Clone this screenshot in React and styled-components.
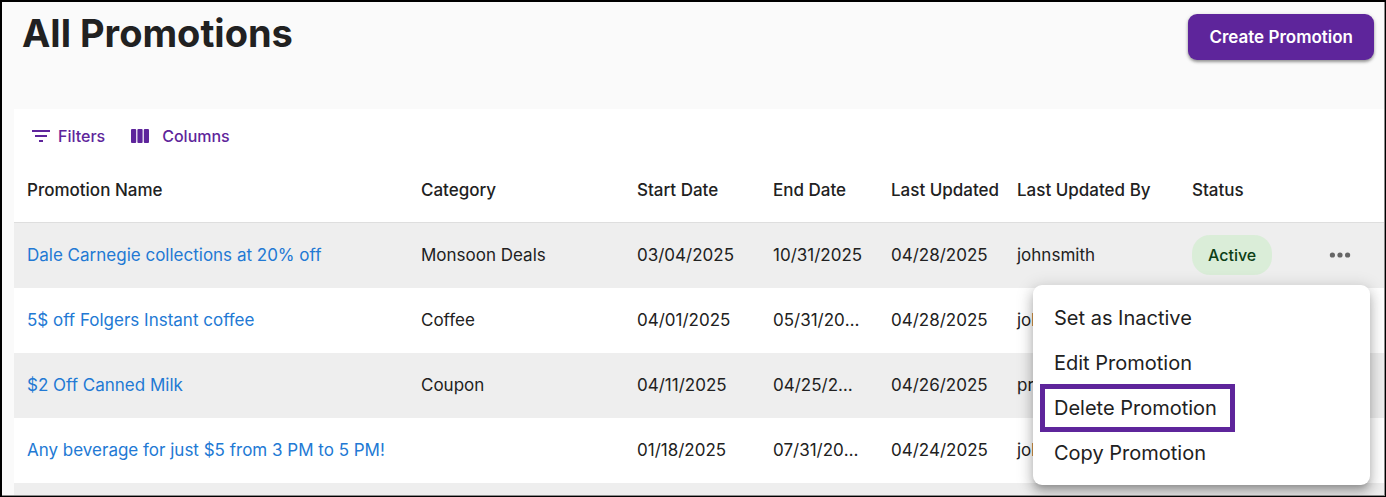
import React from "react";
import styled, { createGlobalStyle } from "styled-components";

const GlobalStyle = createGlobalStyle`
  *, *::before, *::after { box-sizing: border-box; }
  body { margin: 0; background: #fafafa; }
  button { font: inherit; font-optical-sizing: inherit; cursor: pointer; }
`;

const PURPLE = "#5e259b";

const Frame = styled.div`
  height: 100vh;
  border: solid #000;
  border-width: 2px 1px 1px 2px;
`;

const Page = styled.div`
  display: flex;
  flex-direction: column;
  height: 100%;
  overflow: hidden;
  border: solid #8c8c8c;
  border-width: 0 1px 1px 0;
  background: #fafafa;
  color: #212121;
  font-family: Inter, "Liberation Sans", sans-serif;
  font-size: 17px;
  line-height: 24px;
  font-optical-sizing: none;
`;

const Header = styled.header`
  display: flex;
  flex-shrink: 0;
  align-items: flex-start;
  justify-content: space-between;
  padding: 12px 10px 0 20px;
  height: 107px;
`;

const Title = styled.h1`
  margin: 0;
  font-size: 38px;
  line-height: 38px;
  font-weight: 700;
`;

const PrimaryButton = styled.button`
  height: 46px;
  padding: 0 21px;
  border: 0;
  border-radius: 9px;
  background: ${PURPLE};
  color: #fff;
  font-weight: 600;
  box-shadow: 0 2px 3px rgba(0, 0, 0, 0.35), 0 1px 5px rgba(0, 0, 0, 0.12);
`;

const Panel = styled.main`
  flex: 1 0 auto;
  margin-left: 12px;
  background: #fff;
`;

const Toolbar = styled.div`
  display: flex;
  gap: 26px;
  padding: 14px 15px 0;
  height: 48px;
`;

const ToolButton = styled.button`
  display: flex;
  align-items: center;
  gap: ${(p) => p.$gap}px;
  height: 26px;
  padding: 0;
  border: 0;
  background: none;
  color: ${PURPLE};
  font-weight: 500;
  font-size: 16px;
`;

const Table = styled.table`
  width: 100%;
  table-layout: fixed;
  border-collapse: separate;
  border-spacing: 0;
`;

const Col = styled.col`
  width: ${(p) => (p.$width ? `${p.$width}px` : "auto")};
`;

const HeadCell = styled.th`
  height: 66px;
  padding: 0 8px;
  border-bottom: 1px solid #dedede;
  text-align: left;
  font-weight: 500;
  white-space: nowrap;

  &:first-child { padding-left: 13px; }
`;

const Row = styled.tr`
  &:nth-child(odd) { background: #eee; }
`;

const Cell = styled.td`
  height: 65px;
  padding: 0 ${(p) => (p.$tight ? 20 : 16)}px 2px 8px;
  overflow: hidden;
  text-overflow: ellipsis;
  white-space: nowrap;

  &:first-child { padding-left: 13px; }
`;

const ActionCell = styled.td`
  padding: 0 14px 2px 0;
`;

const ActionAnchor = styled.div`
  position: relative;
  display: flex;
  justify-content: center;
`;

const NameLink = styled.a`
  color: #2279d4;
  text-decoration: none;
`;

const Chip = styled.span`
  display: inline-block;
  padding: 8px 16px;
  border-radius: 18px;
  background: #daedd8;
  color: #0d3f16;
  font-size: 16px;
  font-weight: 500;
  vertical-align: middle;
`;

const MoreButton = styled.button`
  display: flex;
  align-items: center;
  justify-content: center;
  width: 40px;
  height: 40px;
  padding: 0;
  border: 0;
  background: none;
  color: #666;
`;

const Menu = styled.div`
  position: absolute;
  z-index: 1;
  top: 50px;
  right: 0;
  width: 337px;
  padding: 11px 0 9px;
  border-radius: 9px;
  background: #fff;
  box-shadow: 0 5px 6px -3px rgba(0, 0, 0, 0.22), 0 8px 12px 1px rgba(0, 0, 0, 0.16),
    0 3px 16px 3px rgba(0, 0, 0, 0.13);
`;

const MenuItem = styled.button`
  display: flex;
  align-items: center;
  width: 100%;
  height: 45px;
  padding: 0 21px;
  border: 0;
  background: none;
  color: #212121;
  font-size: 20px;
`;

const Highlight = styled.span`
  margin: 0 -14px;
  padding: 7px 13px 7px 9px;
  border: 5px solid ${PURPLE};
`;

const FilterIcon = () => (
  <svg width="24" height="24" viewBox="0 0 24 24" fill="currentColor" aria-hidden="true">
    <path d="M10 18h4v-2h-4v2zM3 6v2h18V6H3zm3 7h12v-2H6v2z" />
  </svg>
);

const ColumnsIcon = () => (
  <svg width="18" height="14" viewBox="0 0 18 14" fill="currentColor" aria-hidden="true">
    <rect x="0" y="0" width="5.2" height="14" rx="1" />
    <rect x="6.4" y="0" width="5.2" height="14" rx="1" />
    <rect x="12.8" y="0" width="5.2" height="14" rx="1" />
  </svg>
);

const MoreIcon = () => (
  <svg width="22" height="6" viewBox="0 0 22 6" fill="currentColor" aria-hidden="true">
    <circle cx="3.4" cy="3" r="2.6" />
    <circle cx="11" cy="3" r="2.6" />
    <circle cx="18.6" cy="3" r="2.6" />
  </svg>
);

const columns = [
  { label: "Promotion Name" },
  { label: "Category", width: 216 },
  { label: "Start Date", width: 136 },
  { label: "End Date", width: 118, tight: true },
  { label: "Last Updated", width: 126 },
  { label: "Last Updated By", width: 175 },
  { label: "Status", width: 126 },
  { label: "", width: 74 },
];

const promotions = [
  ["Dale Carnegie collections at 20% off", "Monsoon Deals", "03/04/2025", "10/31/2025", "04/28/2025", "johnsmith"],
  ["5$ off Folgers Instant coffee", "Coffee", "04/01/2025", "05/31/2025", "04/28/2025", "johnsmith"],
  ["$2 Off Canned Milk", "Coupon", "04/11/2025", "04/25/2025", "04/26/2025", "promo"],
  ["Any beverage for just $5 from 3 PM to 5 PM!", "", "01/18/2025", "07/31/2025", "04/24/2025", "johnsmith"],
  ["", "", "", "", "", ""],
];

const menuItems = ["Set as Inactive", "Edit Promotion", "Delete Promotion", "Copy Promotion"];

export default function App() {
  return (
    <>
      <GlobalStyle />
      <Frame>
        <Page>
          <Header>
            <Title>All Promotions</Title>
            <PrimaryButton type="button">Create Promotion</PrimaryButton>
          </Header>
          <Panel>
            <Toolbar>
              <ToolButton type="button" $gap={5}>
                <FilterIcon />
                Filters
              </ToolButton>
              <ToolButton type="button" $gap={13}>
                <ColumnsIcon />
                Columns
              </ToolButton>
            </Toolbar>
            <Table>
              <colgroup>
                {columns.map((c) => (
                  <Col key={c.label} $width={c.width} />
                ))}
              </colgroup>
              <thead>
                <tr>
                  {columns.map((c) => (
                    <HeadCell key={c.label} scope="col">{c.label}</HeadCell>
                  ))}
                </tr>
              </thead>
              <tbody>
                {promotions.map(([name, ...rest], i) => (
                  <Row key={name}>
                    <Cell>{name && <NameLink href="#">{name}</NameLink>}</Cell>
                    {rest.map((value, j) => (
                      <Cell key={j} $tight={columns[j + 1].tight}>{value}</Cell>
                    ))}
                    <Cell>{i === 0 && <Chip>Active</Chip>}</Cell>
                    <ActionCell>
                      {i === 0 && (
                        <ActionAnchor>
                          <MoreButton type="button" aria-label="More actions" aria-haspopup="menu" aria-expanded="true">
                            <MoreIcon />
                          </MoreButton>
                          <Menu role="menu">
                            {menuItems.map((item) => (
                              <MenuItem key={item} type="button" role="menuitem">
                                {item === "Delete Promotion" ? <Highlight>{item}</Highlight> : item}
                              </MenuItem>
                            ))}
                          </Menu>
                        </ActionAnchor>
                      )}
                    </ActionCell>
                  </Row>
                ))}
              </tbody>
            </Table>
          </Panel>
        </Page>
      </Frame>
    </>
  );
}
